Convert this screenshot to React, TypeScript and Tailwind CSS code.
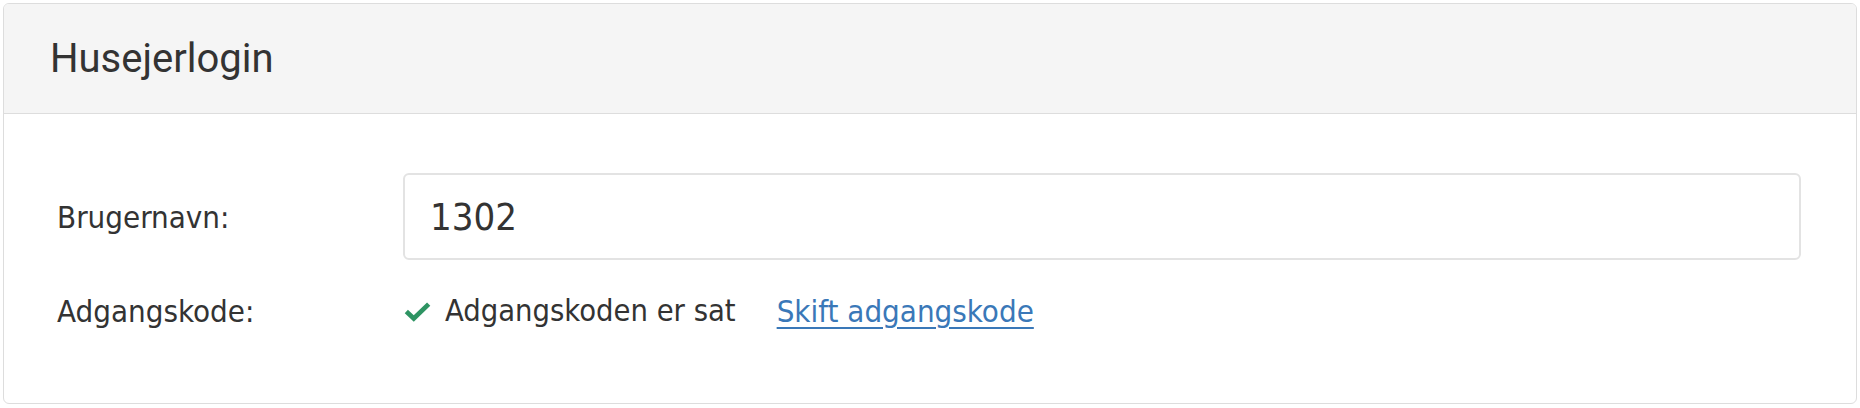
export default function App() {
  return (
    <div className="w-[1860px] h-[408px] bg-white p-[3px]">
      <div className="flex flex-col w-full h-[401px] border border-[#dddddd] rounded-[6px] overflow-hidden">
        <div className="h-[110px] shrink-0 flex items-center pl-[46px] bg-[#f5f5f5] border-b border-[#dddddd]">
          <h1 className="text-[40px] leading-none text-[#333333] font-['Roboto',sans-serif] font-normal">
            Husejerlogin
          </h1>
        </div>

        <div className="flex flex-col pt-[59px] pl-[53px] pr-[55px] font-['DejaVu_Sans_Condensed','Liberation_Sans',sans-serif] text-[#333333]">
          <div className="flex items-center">
            <label className="w-[346px] shrink-0 text-[31px] leading-none pt-[2px]">Brugernavn:</label>
            <input
              className="flex-1 h-[87px] px-[25px] text-[38px] text-[#333333] bg-white border-2 border-[#e3e3e3] rounded-[6px] outline-none"
              defaultValue="1302"
            />
          </div>

          <div className="flex items-center h-[36px] mt-[33px]">
            <span className="w-[346px] shrink-0 text-[31px] leading-none">Adgangskode:</span>
            <svg viewBox="0 0 29 22" className="w-[27px] h-[21px] shrink-0 ml-[1px] mr-[14px]">
              <polyline
                points="2.5,11 10.5,18.5 26.5,3"
                fill="none"
                stroke="#2e9463"
                strokeWidth="5"
              />
            </svg>
            <span className="text-[30.6px] leading-none">Adgangskoden er sat</span>
            <a href="#" className="ml-[41px] text-[31px] leading-none text-[#3a78b8] underline underline-offset-[5px] decoration-2">
              Skift adgangskode
            </a>
          </div>
        </div>
      </div>
    </div>
  )
}
